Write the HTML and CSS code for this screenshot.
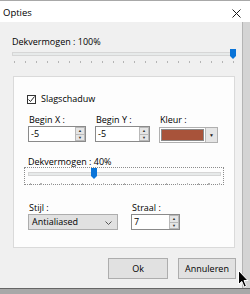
FILE: index.html
```html
<!DOCTYPE html>
<html>
<head>
<meta charset="utf-8">
<link rel="stylesheet" href="styles.css">
</head>
<body>
<div class="screen">
  <div class="window">
    <div class="titlebar">
      <span class="title">Opties</span>
      <svg class="close" width="9" height="9" viewBox="0 0 9 9"><path d="M0.5 0.5 L8.5 8.5 M8.5 0.5 L0.5 8.5" stroke="#1a1a1a" stroke-width="1" fill="none"/></svg>
    </div>
    <div class="client">
      <div class="main">
        <div class="label lbl-top">Dekvermogen : 100%</div>
        <div class="slider slider-top">
          <div class="track"></div>
          <div class="ticks"></div>
          <svg class="thumb" width="6" height="10" viewBox="0 0 6 10"><polygon points="0,0 6,0 6,7 3,10 0,7" fill="#0a74d8"/></svg>
        </div>
        <div class="group">
          <div class="check-row">
            <span class="checkbox"><svg width="9" height="9" viewBox="0 0 9 9"><path d="M1.5 4.5 L3.5 6.5 L7.5 1.5" stroke="#222" stroke-width="1" fill="none"/></svg></span>
            <span class="label">Slagschaduw</span>
          </div>
          <div class="row row-1">
            <div class="field f-x">
              <div class="label">Begin X :</div>
              <div class="spin"><span class="val">-5</span><span class="spin-btns"><span class="sb">▲</span><span class="sb">▼</span></span></div>
            </div>
            <div class="field f-y">
              <div class="label">Begin Y :</div>
              <div class="spin"><span class="val">-5</span><span class="spin-btns"><span class="sb">▲</span><span class="sb">▼</span></span></div>
            </div>
            <div class="field f-color">
              <div class="label">Kleur :</div>
              <div class="colorpick"><span class="swatch"></span><span class="drop">▼</span></div>
            </div>
          </div>
          <div class="label lbl-40">Dekvermogen : 40%</div>
          <div class="slider slider-focus">
            <div class="track"></div>
            <div class="ticks"></div>
            <svg class="thumb" width="6" height="11" viewBox="0 0 6 11"><polygon points="0,0 6,0 6,8 3,11 0,8" fill="#0a74d8"/></svg>
          </div>
          <div class="row row-3">
            <div class="field f-style">
              <div class="label">Stijl :</div>
              <div class="combo"><span class="val">Antialiased</span><svg class="chev" width="7" height="4" viewBox="0 0 7 4"><path d="M0.5 0.5 L3.5 3.5 L6.5 0.5" stroke="#555" stroke-width="1" fill="none"/></svg></div>
            </div>
            <div class="field f-radius">
              <div class="label">Straal :</div>
              <div class="spin"><span class="val">7</span><span class="spin-btns"><span class="sb">▲</span><span class="sb">▼</span></span></div>
            </div>
          </div>
        </div>
        <div class="buttons">
          <button class="btn btn-ok">Ok</button>
          <button class="btn btn-cancel">Annuleren</button>
        </div>
      </div>
      <div class="edge"></div>
    </div>
  </div>
  <div class="under"></div>
  <svg class="cursor" width="11" height="18" viewBox="0 0 11 18"><path d="M0.5 0.5 L0.5 14.5 L3.8 11.4 L6.2 17 L8.4 16 L6 10.5 L10 10.5 Z" fill="#000" stroke="#fff" stroke-width="1"/></svg>
</div>
</body>
</html>
```

FILE: styles.css
```css
* { box-sizing: border-box; }
html, body { margin: 0; padding: 0; }
body {
  width: 250px;
  height: 294px;
  overflow: hidden;
  background: #8c8c8c;
  font-family: "Open Sans", "Noto Sans", sans-serif;
  font-size: 9px;
  color: #000;
}
.screen { position: relative; width: 250px; height: 294px; }
.window {
  width: 250px;
  height: 289px;
  background: #f0f0f0;
  border-top: 1px solid #a8a8a8;
  border-bottom: 1px solid #666;
  display: flex;
  flex-direction: column;
}
.titlebar {
  height: 21px;
  background: #fff;
  display: flex;
  align-items: center;
  padding-left: 3px;
  flex: none;
}
.title { font-size: 9.5px; line-height: 12px; padding-top: 2px; }
.close { margin-left: auto; margin-right: 9px; margin-top: 3px; }
.client { flex: 1; display: flex; }
.main { width: 242px; padding-left: 12px; padding-top: 14px; }
.edge { flex: 1; background: #d4d4d4; border-left: 1px solid #b4b4b4; }
.label { line-height: 12px; height: 12px; white-space: nowrap; }

.slider { position: relative; }
.slider .track {
  position: absolute;
  height: 4px;
  background: #e7eaea;
  border: 1px solid #d6d6d6;
}
.slider .ticks {
  position: absolute;
  height: 2px;
  background: repeating-linear-gradient(to right, #b4b4b4 0 1px, transparent 1px 10.95px);
}
.slider .thumb { position: absolute; }
.slider-top { width: 224px; height: 14px; margin-top: 1px; }
.slider-top .track { left: 0; top: 3px; width: 221px; }
.slider-top .ticks { left: 2px; top: 12px; width: 222px; }
.slider-top .thumb { left: 218px; top: 0; }

.group {
  margin-top: 13px;
  margin-left: 1px;
  width: 222px;
  height: 172px;
  background: #fdfdfd;
  border: 1px solid #dadada;
  padding: 16px 0 0 14px;
}
.check-row { display: flex; align-items: center; height: 12px; margin-left: -1px; }
.checkbox {
  width: 9px; height: 9px;
  border: 1px solid #333;
  background: #fff;
  display: flex;
  margin-right: 5px;
}
.checkbox svg { margin: -1px; }
.row { display: flex; }
.row-1 { margin-top: 9px; gap: 9px; }
.field { display: flex; flex-direction: column; }
.field .label { padding-left: 1px; }
.spin {
  height: 16px;
  border: 1px solid #8a8a8a;
  background: #fff;
  display: flex;
  align-items: center;
  padding-left: 2px;
}
.spin .val { flex: 1; line-height: 12px; }
.spin-btns {
  display: flex;
  flex-direction: column;
  width: 10px;
  height: 14px;
}
.sb {
  flex: 1;
  background: #e5e5e5;
  border: 1px solid #b9b9b9;
  font-size: 4px;
  line-height: 5px;
  text-align: center;
  color: #333;
}
.sb + .sb { border-top: none; }
.f-x { width: 58px; }
.f-y { width: 55px; }
.f-color { width: 59px; }
.colorpick {
  height: 16px;
  display: flex;
  border: 1px solid #b0b0b0;
  background: #fff;
  margin-top: 1px;
}
.swatch { flex: 1; background: #a8533a; border: 1px solid #fff; outline: 1px solid #8a8a8a; outline-offset: -2px; }
.drop {
  width: 12px;
  background: #e5e5e5;
  border-left: 1px solid #b9b9b9;
  font-size: 5px;
  line-height: 14px;
  text-align: center;
  color: #222;
}
.lbl-40 { margin-top: 13px; }
.slider-focus {
  margin-top: -1px;
  margin-left: -4px;
  width: 200px;
  height: 18px;
  border: 1px dotted #8c8c8c;
}
.slider-focus .track { left: 3px; top: 4px; width: 193px; }
.slider-focus .ticks { left: 5px; top: 15px; width: 191px; background: repeating-linear-gradient(to right, #b4b4b4 0 1px, transparent 1px 10.5px); }
.slider-focus .thumb { left: 66px; top: 0; }
.row-3 { margin-top: 17px; gap: 13px; }
.f-style { width: 90px; }
.f-radius { width: 49px; }
.combo {
  height: 16px;
  background: #e1e1e1;
  border: 1px solid #adadad;
  display: flex;
  align-items: center;
  padding: 0 5px 0 3px;
}
.combo .val { flex: 1; line-height: 12px; }
.chev { margin-top: 1px; }
.buttons {
  display: flex;
  justify-content: flex-end;
  gap: 10px;
  margin-top: 10px;
  padding-right: 6px;
}
.btn {
  height: 21px;
  background: #e1e1e1;
  border: 1px solid #adadad;
  font-family: inherit;
  font-size: 9px;
  color: #000;
  padding: 0;
  margin: 0;
}
.btn-ok { width: 60px; }
.btn-cancel { width: 58px; }
.under { height: 5px; background: #a8a8a8; }
.cursor { position: absolute; left: 238px; top: 270px; }
```
